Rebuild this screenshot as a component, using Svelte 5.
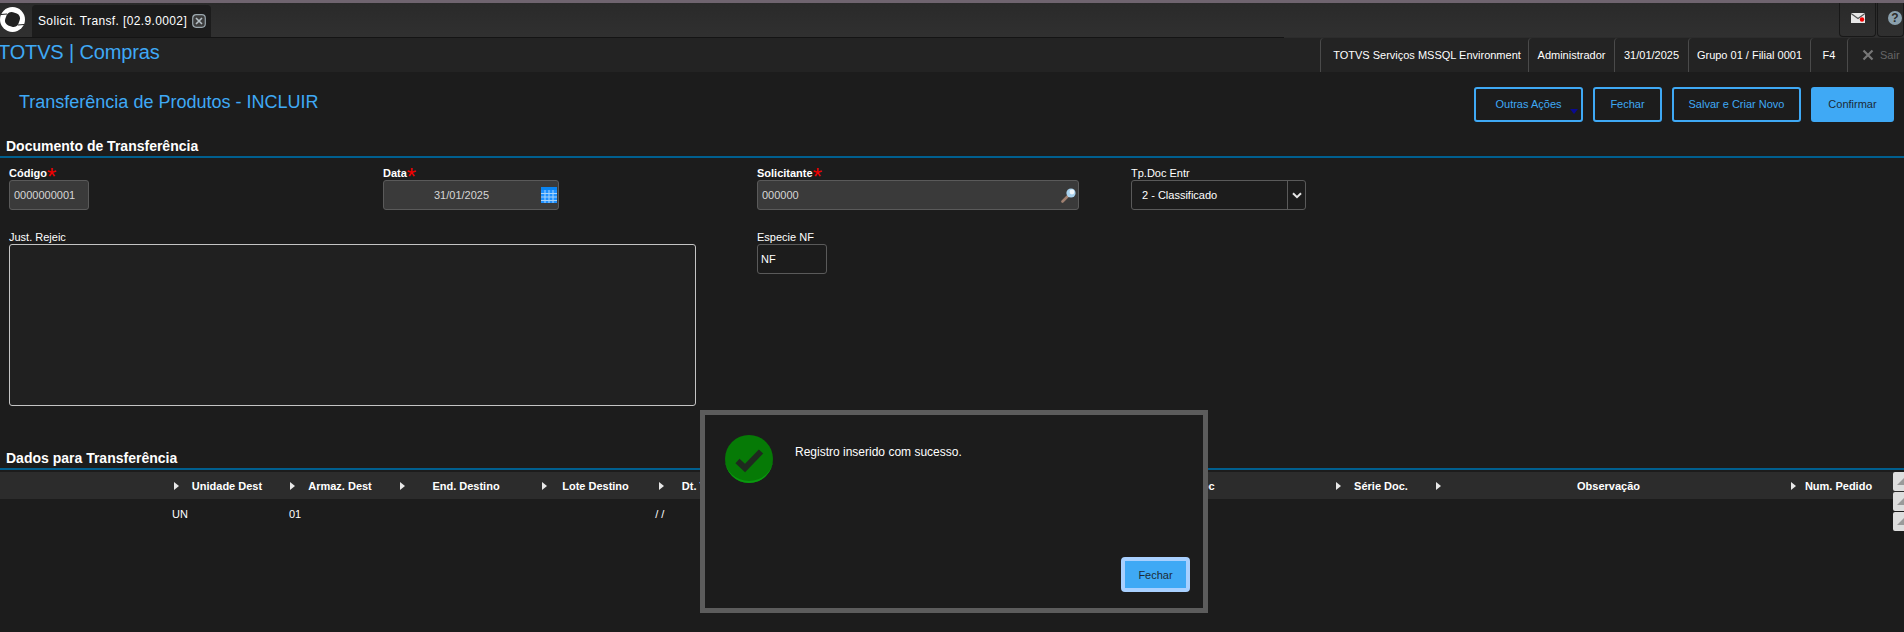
<script>
  const info = [
    { label: "TOTVS Serviços MSSQL Environment", width: 208 },
    { label: "Administrador", width: 86 },
    { label: "31/01/2025", width: 74 },
    { label: "Grupo 01 / Filial 0001", width: 122 },
    { label: "F4", width: 37 }
  ];

  const columns = [
    { label: "", width: 170, plain: true },
    { label: "Unidade Dest", width: 116 },
    { label: "Armaz. Dest", width: 110 },
    { label: "End. Destino", width: 142 },
    { label: "Lote Destino", width: 117 },
    { label: "Dt. Validade", width: 118 },
    { label: "", width: 275 },
    { label: "Num. Doc", width: 284 },
    { label: "Série Doc.", width: 100 },
    { label: "Observação", width: 355 },
    { label: "Num. Pedido", width: 105 }
  ];

  const cells = [
    { value: "UN", left: 172 },
    { value: "01", left: 101 },
    { value: "/ /", left: 354 }
  ];
</script>

<div class="page">
  <div class="strip"></div>

  <header class="tabbar">
    <div class="logo">
      <svg width="25" height="25" viewBox="0 0 25 25">
        <circle cx="12.5" cy="12.5" r="12.5" fill="#fff" />
        <rect x="5.5" y="5.5" width="14" height="14" rx="5" fill="#222" transform="rotate(20 12.5 12.5)" />
        <path d="M1 7.5 L7 7 M24 17.5 L18 18" stroke="#222" stroke-width="1.2" />
      </svg>
    </div>
    <div class="tab">
      <span>Solicit. Transf. [02.9.0002]</span>
      <svg class="tab-close" width="14" height="14" viewBox="0 0 14 14">
        <rect x="0.7" y="0.7" width="12.6" height="12.6" rx="3.5" fill="#3c3c3c" stroke="#9aa6ad" stroke-width="1.2" />
        <path d="M4 4 L10 10 M10 4 L4 10" stroke="#b4bec4" stroke-width="1.6" />
      </svg>
    </div>
    <div class="spacer"></div>
    <div class="tool">
      <svg width="14" height="10" viewBox="0 0 14 10">
        <rect width="14" height="10" fill="#e8e8e8" />
        <path d="M0 0.5 L7 5.5 L14 0.5" fill="none" stroke="#555" stroke-width="1.1" />
        <circle cx="11" cy="6.5" r="2.2" fill="#f40000" />
      </svg>
    </div>
    <div class="tool tool-help">
      <span class="help">?</span>
    </div>
  </header>

  <div class="appbar">
    <div class="app-name">TOTVS | Compras</div>
    <div class="info">
      {#each info as item}
        <div class="info-item" style:width="{item.width}px">{item.label}</div>
      {/each}
      <div class="info-item sair">
        <svg width="12" height="12" viewBox="0 0 12 12">
          <path d="M1.5 1.5 L10.5 10.5 M10.5 1.5 L1.5 10.5" stroke="#777" stroke-width="2.2" />
        </svg>
        <span>Sair</span>
      </div>
    </div>
  </div>

  <div class="title-row">
    <h1>Transferência de Produtos - INCLUIR</h1>
    <div class="actions">
      <button class="btn more">Outras Ações<i class="caret"></i></button>
      <button class="btn fechar">Fechar</button>
      <button class="btn salvar">Salvar e Criar Novo</button>
      <button class="btn primary">Confirmar</button>
    </div>
  </div>

  <h2 class="section first">Documento de Transferência</h2>

  <div class="form">
    <div class="field">
      <label class="req">Código<b>*</b></label>
      <div class="input disabled codigo">0000000001</div>
    </div>
    <div class="field">
      <label class="req">Data<b>*</b></label>
      <div class="input disabled data">
        <span class="date">31/01/2025</span>
        <svg class="calendar" width="16" height="16" viewBox="0 0 16 16">
          <rect width="16" height="16" fill="#1e90ff" />
          <rect y="0" width="16" height="3" fill="#0a84f0" />
          <path d="M0 6.5 H16 M0 10 H16 M0 13.5 H16 M4 3 V16 M8 3 V16 M12 3 V16" stroke="#a8d4fb" stroke-width="1" />
        </svg>
      </div>
    </div>
    <div class="field">
      <label class="req">Solicitante<b>*</b></label>
      <div class="input disabled solicitante">
        <span>000000</span>
        <svg class="lens" width="16" height="16" viewBox="0 0 16 16">
          <path d="M1.5 14.5 L7 9" stroke="#a08070" stroke-width="2.6" stroke-linecap="round" />
          <circle cx="10" cy="6" r="4.6" fill="#a9d2ee" />
          <circle cx="11" cy="5" r="2.4" fill="#f2f8fc" />
        </svg>
      </div>
    </div>
    <div class="field">
      <label>Tp.Doc Entr</label>
      <div class="select">
        <span>2 - Classificado</span>
        <div class="select-arrow">
          <svg width="10" height="7" viewBox="0 0 10 7">
            <path d="M1 1.2 L5 5.2 L9 1.2" fill="none" stroke="#e6e6e6" stroke-width="2" />
          </svg>
        </div>
      </div>
    </div>
    <div class="field wide">
      <label>Just. Rejeic</label>
      <div class="textarea"></div>
    </div>
    <div class="field">
      <label>Especie NF</label>
      <div class="input especie">NF</div>
    </div>
  </div>

  <h2 class="section second">Dados para Transferência</h2>

  <div class="grid-head">
    {#each columns as col}
      <div class="col" style:width="{col.width}px">
        {#if !col.plain}<i class="arrow"></i>{/if}
        <span>{col.label}</span>
      </div>
    {/each}
  </div>
  <div class="grid-row">
    {#each cells as cell}
      <span style:margin-left="{cell.left}px">{cell.value}</span>
    {/each}
  </div>

  <div class="scroller">
    {#each [0, 1, 2] as n}
      <div class="scroll-btn"><i></i></div>
    {/each}
  </div>

  <div class="dialog">
    <div class="dialog-body">
      <svg class="ok" width="48" height="48" viewBox="0 0 48 48">
        <circle cx="24" cy="24" r="24" fill="#067a06" />
        <path d="M24 48 A24 24 0 0 1 0 24 A24 22 0 0 0 48 24 A24 24 0 0 1 24 48 Z" fill="#0a970f" />
        <path d="M12.5 26 L20 33 L36 16.5" fill="none" stroke="#1f2a1f" stroke-width="6" />
      </svg>
      <p>Registro inserido com sucesso.</p>
    </div>
    <div class="dialog-foot">
      <button class="btn primary focused">Fechar</button>
    </div>
  </div>
</div>

<style>
  :global(body) {
    background: #1c1c1c;
    margin: 0;
    overflow: hidden;
  }

  .page {
    background: #1c1c1c;
    color: #fff;
    font-family: "Liberation Sans", Arial, sans-serif;
    font-size: 11px;
    height: 632px;
    overflow: hidden;
    position: relative;
    width: 1904px;
  }

  .strip {
    background: #6f646f;
    height: 3px;
  }

  .tabbar {
    align-items: stretch;
    background: linear-gradient(#2a2a2a, #303030);
    border-bottom: 1px solid;
    border-image: linear-gradient(to right, #141414 1284px, #2c2c2c 1284px) 1;
    box-sizing: border-box;
    display: flex;
    height: 35px;
  }

  .logo {
    align-items: center;
    box-sizing: border-box;
    display: flex;
    padding-bottom: 2px;
    width: 32px;
  }

  .tab {
    align-items: center;
    background: #1c1c1c;
    border-radius: 4px 4px 0 0;
    box-sizing: border-box;
    display: flex;
    font-size: 12px;
    gap: 5px;
    letter-spacing: 0.37px;
    margin-top: 2px;
    padding-left: 6px;
    width: 179px;
  }

  .tab-close {
    flex: none;
  }

  .spacer {
    flex: 1;
  }

  .tool {
    align-items: center;
    border: 1px solid #181818;
    border-top: 0;
    border-radius: 0 0 4px 4px;
    box-sizing: border-box;
    display: flex;
    justify-content: center;
    margin-right: 1px;
    padding-bottom: 3px;
    width: 37px;
  }

  .tool-help {
    justify-content: flex-start;
    margin-right: 0;
    padding-left: 10px;
    width: 27px;
  }

  .help {
    background: #8aa0ad;
    border-radius: 50%;
    color: #2b2b2b;
    display: block;
    font-size: 12px;
    font-weight: bold;
    height: 14px;
    line-height: 14px;
    text-align: center;
    width: 14px;
  }

  .appbar {
    background: #232323;
    display: flex;
    height: 34px;
    justify-content: space-between;
  }

  .app-name {
    color: #3fa9f5;
    font-size: 20px;
    letter-spacing: -0.15px;
    line-height: 28px;
    margin-left: -2px;
  }

  .info {
    display: flex;
  }

  .info-item {
    align-items: center;
    border-left: 1px solid #4a4a4a;
    border-radius: 4px 0 0 0;
    box-sizing: border-box;
    display: flex;
    justify-content: center;
  }

  .info-item:first-child {
    padding-left: 5px;
  }

  .sair {
    color: #666;
    gap: 6px;
    justify-content: flex-start;
    padding-left: 14px;
    width: 57px;
  }

  .title-row {
    align-items: center;
    box-sizing: border-box;
    display: flex;
    height: 50px;
    justify-content: space-between;
    padding: 14px 10px 0 19px;
  }

  h1 {
    color: #3fa9f5;
    font-size: 18px;
    font-weight: normal;
    margin: 0 0 3px;
  }

  .actions {
    display: flex;
    gap: 10px;
  }

  .btn {
    background: transparent;
    border: 2px solid #3fa9f5;
    border-radius: 3px;
    box-sizing: border-box;
    color: #3fa9f5;
    font-family: inherit;
    font-size: 11px;
    height: 35px;
    padding: 0;
    position: relative;
  }

  .more {
    width: 109px;
  }

  .fechar {
    width: 69px;
  }

  .salvar {
    width: 129px;
  }

  .primary {
    background: #3fa9f5;
    color: #1c2a36;
    width: 83px;
  }

  .caret {
    border-left: 4px solid transparent;
    border-right: 4px solid transparent;
    border-top: 5px solid #0a0a90;
    bottom: 6px;
    position: absolute;
    right: 3px;
  }

  .section {
    border-bottom: 2px solid #005f8f;
    font-size: 14px;
    font-weight: bold;
    line-height: 16px;
    margin: 0;
    padding-left: 6px;
  }

  .first {
    margin-top: 16px;
    padding-bottom: 2px;
  }

  .form {
    display: grid;
    grid-template-columns: repeat(4, 374px);
    grid-template-rows: 55px 175px;
    padding: 9px 0 0 9px;
    row-gap: 9px;
  }

  .field {
    display: flex;
    flex-direction: column;
  }

  label {
    display: block;
    height: 13px;
    line-height: 13px;
  }

  .req {
    font-weight: bold;
  }

  .req b {
    color: #f00000;
    font-size: 24px;
    font-weight: normal;
    line-height: 20px;
    vertical-align: top;
  }

  .input {
    align-items: center;
    border: 1px solid #5a5a5a;
    border-radius: 3px;
    box-sizing: border-box;
    display: flex;
    height: 30px;
    padding-left: 4px;
  }

  .disabled {
    background: #3a3a3a;
    color: #d6d6d6;
  }

  .codigo {
    width: 80px;
  }

  .data {
    position: relative;
    width: 176px;
  }

  .date {
    margin-left: 46px;
  }

  .calendar {
    position: absolute;
    right: 1px;
    top: 6px;
  }

  .solicitante {
    justify-content: space-between;
    padding-right: 1px;
    width: 322px;
  }

  .select {
    align-items: center;
    border: 1px solid #5a5a5a;
    border-radius: 3px;
    box-sizing: border-box;
    display: flex;
    height: 30px;
    justify-content: space-between;
    padding-left: 10px;
    width: 175px;
  }

  .select-arrow {
    align-items: center;
    border-left: 1px solid #5a5a5a;
    display: flex;
    height: 100%;
    justify-content: center;
    width: 17px;
  }

  .wide {
    grid-column: span 2;
  }

  .textarea {
    background: #202020;
    border: 1px solid #c4c4c4;
    border-radius: 3px;
    box-sizing: border-box;
    height: 162px;
    width: 687px;
  }

  .especie {
    padding-left: 3px;
    width: 70px;
  }

  .second {
    line-height: 17px;
    margin-top: 44px;
    padding-bottom: 1px;
  }

  .grid-head {
    align-items: center;
    background: #2c2c2c;
    display: flex;
    font-weight: bold;
    height: 27px;
    margin-top: 2px;
  }

  .col {
    align-items: center;
    box-sizing: border-box;
    display: flex;
    flex: none;
    justify-content: center;
    padding-right: 2px;
    position: relative;
  }

  .arrow {
    border-bottom: 4px solid transparent;
    border-left: 5px solid #e8e8e8;
    border-top: 4px solid transparent;
    left: 4px;
    position: absolute;
  }

  .grid-row {
    align-items: center;
    display: flex;
    height: 30px;
  }

  .grid-row span {
    flex: none;
  }

  .scroller {
    position: absolute;
    right: 0;
    top: 472px;
    width: 11px;
  }

  .scroll-btn {
    background: #dedede;
    border-radius: 2px 0 0 2px;
    height: 19px;
    margin-bottom: 1px;
    overflow: hidden;
    position: relative;
  }

  .scroll-btn i {
    border-bottom: 7px solid #9a9a9a;
    border-left: 7px solid transparent;
    border-right: 7px solid transparent;
    left: 4px;
    position: absolute;
    top: 6px;
  }

  .dialog {
    background: #1c1c1c;
    border: 5px solid #5c5c5c;
    box-sizing: border-box;
    display: flex;
    flex-direction: column;
    height: 203px;
    justify-content: space-between;
    left: 700px;
    padding: 20px 13px 16px 20px;
    position: absolute;
    top: 410px;
    width: 508px;
  }

  .dialog-body {
    display: flex;
    gap: 22px;
  }

  .ok {
    flex: none;
  }

  .dialog p {
    font-size: 12px;
    line-height: 14px;
    margin: 10px 0 0;
  }

  .dialog-foot {
    display: flex;
    justify-content: flex-end;
  }

  .focused {
    border: 4px solid #a8d0ff;
    border-radius: 4px;
    width: 69px;
  }
</style>
